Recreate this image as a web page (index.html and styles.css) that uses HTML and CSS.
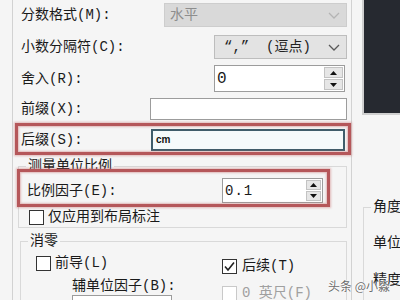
FILE: index.html
```html
<!DOCTYPE html>
<html lang="zh-CN">
<head>
<meta charset="utf-8">
<title>主单位</title>
<link rel="stylesheet" href="styles.css">
</head>
<body>
<div class="screen">
  <div class="form">
    <div class="row r1">
      <span class="lbl">分数格式(M):</span>
      <div class="select disabled ctl w183">
        <span>水平</span>
        <svg class="chev" width="12" height="7" viewBox="0 0 12 7"><polyline points="1,1 6,6 11,1"/></svg>
      </div>
    </div>
    <div class="row r2">
      <span class="lbl">小数分隔符(C):</span>
      <div class="select ctl w133">
        <span class="mono">“,”&nbsp;&nbsp;(逗点)</span>
        <svg class="chev" width="12" height="7" viewBox="0 0 12 7"><polyline points="1,1 6,6 11,1"/></svg>
      </div>
    </div>
    <div class="row r3">
      <span class="lbl">舍入(R):</span>
      <div class="input spinbox ctl w131">
        <span class="val big">0</span>
        <div class="spin">
          <span class="btn"><svg width="7" height="4" viewBox="0 0 7 4"><polygon points="0,4 3.5,0 7,4"/></svg></span>
          <span class="btn"><svg width="7" height="4" viewBox="0 0 7 4"><polygon points="0,0 3.5,4 7,0"/></svg></span>
        </div>
      </div>
    </div>
    <div class="row r4">
      <span class="lbl">前缀(X):</span>
      <div class="input ctl w197"></div>
    </div>
    <div class="row r5 marked">
      <span class="lbl">后缀(S):</span>
      <div class="input focus ctl w194"><span class="val small">cm</span></div>
    </div>

    <fieldset class="group g-scale">
      <legend>测量单位比例</legend>
      <div class="row r-scale marked2">
        <span class="lbl">比例因子(E):</span>
        <div class="input spinbox ctl w101">
          <span class="val num">0.1</span>
          <div class="spin">
            <span class="btn"><svg width="7" height="4" viewBox="0 0 7 4"><polygon points="0,4 3.5,0 7,4"/></svg></span>
            <span class="btn"><svg width="7" height="4" viewBox="0 0 7 4"><polygon points="0,0 3.5,4 7,0"/></svg></span>
          </div>
        </div>
      </div>
      <label class="check c-layout"><span class="cb"></span>仅应用到布局标注</label>
    </fieldset>

    <fieldset class="group g-zero">
      <legend>消零</legend>
      <div class="zero-cols">
        <div class="zcol left">
          <label class="check c-lead"><span class="cb"></span>前导(L)</label>
          <div class="sub-lbl">辅单位因子(B):</div>
          <div class="input spinbox sub-input">
            <div class="spin"><span class="btn"></span></div>
          </div>
        </div>
        <div class="zcol right">
          <label class="check c-trail"><span class="cb on"><svg width="13" height="13" viewBox="0 0 13 13"><polyline points="2,6.5 5,10 11,2.5"/></svg></span>后续(T)</label>
          <label class="check c-feet off"><span class="cb"></span>0&nbsp;英尺(F)</label>
        </div>
      </div>
    </fieldset>
  </div>

  <div class="side">
    <div class="preview"></div>
    <fieldset class="group g-angle">
      <legend>角度标注</legend>
      <div class="side-row s1">单位格式(A):</div>
      <div class="side-row s2">精度(O):</div>
    </fieldset>
  </div>

  <div class="watermark">头条 @小淼</div>
</div>
</body>
</html>
```

FILE: styles.css
```css
* { box-sizing: border-box; }
html, body { margin: 0; padding: 0; }
body {
  width: 400px;
  height: 300px;
  overflow: hidden;
  background: #f5f5f5;
  font-family: "Liberation Mono", "Noto Sans CJK SC", monospace;
  font-size: 14px;
  line-height: 16px;
  color: #1a1a1a;
}

.screen {
  position: relative;
  display: flex;
  height: 300px;
  padding-left: 12px;
  overflow: hidden;
}

.form {
  flex: none;
  width: 340px;
  border-left: 1px solid #d2d2d2;
  border-right: 1px solid #d2d2d2;
}

.row {
  position: relative;
  display: flex;
  align-items: center;
  padding: 0 4px 0 8px;
}
.lbl { white-space: nowrap; }
.ctl { margin-left: auto; height: 100%; }

.r1 { margin-top: 3px; height: 24px; }
.r2 { margin-top: 8px; height: 24px; }
.r3 { margin-top: 6px; height: 27px; padding-right: 6px; }
.r4 { margin-top: 6px; height: 22px; }
.r5 { margin-top: 9px; height: 22px; padding-right: 6px; }

.w183 { width: 183px; }
.w133 { width: 133px; }
.w131 { width: 131px; }
.w197 { width: 197px; }
.w194 { width: 194px; }
.w101 { width: 101px; }

.select {
  display: flex;
  align-items: center;
  padding: 0 6px 0 9px;
  background: #e3e3e3;
  border: 1px solid #bdbdbd;
  color: #222;
}
.select.disabled {
  padding-left: 5px;
  background: #d9d9d9;
  border-color: #cdcdcd;
  color: #8d8d8d;
}
.chev { margin-left: auto; fill: none; stroke: #5a5a5a; stroke-width: 1.3; }
.select.disabled .chev { stroke: #b4b4b4; }

.input {
  display: flex;
  align-items: center;
  background: #ffffff;
  border: 1px solid #9c9c9c;
}
.input.focus {
  background: #f5fafb;
  border: 2px solid #3f5d6b;
}
.val { padding-left: 3px; }
.val.big { font-size: 16px; padding-left: 2px; }
.val.num { letter-spacing: 1px; padding-left: 2px; }
.val.small {
  font-family: "Liberation Sans", sans-serif;
  font-size: 10px;
  font-weight: bold;
  padding-left: 3px;
  color: #111;
}

.spinbox { padding-right: 1px; }
.spin {
  margin-left: auto;
  display: flex;
  flex-direction: column;
  gap: 1px;
  width: 19px;
}
.btn {
  display: flex;
  align-items: center;
  justify-content: center;
  height: 11px;
  background: #e6e6e6;
  border: 1px solid #c3c3c3;
}
.btn svg { fill: #111; }
.r-scale .spin { width: 15px; }
.r-scale .btn { height: 10px; }

/* red annotation boxes */
.marked::after,
.marked2::after {
  content: "";
  position: absolute;
  border: 3px solid #b5575a;
  box-shadow: 0 0 2px 1px rgba(200, 110, 110, 0.45), inset 0 0 2px 1px rgba(200, 110, 110, 0.45);
  pointer-events: none;
}
.marked::after { left: 2px; right: 0; top: -6px; bottom: -4px; }
.marked2::after { left: -2px; right: 16px; top: -9px; bottom: -4px; }

/* group boxes */
.group {
  margin: 0;
  padding: 0;
  min-width: 0;
  border: 1px solid #d9d9d9;
}
.group legend {
  padding: 0 2px;
  margin-left: 7px;
  line-height: 16px;
  height: 16px;
}

.g-scale { margin: 7px 4px 0 5px; padding: 4px 0 2px 0; }
.r-scale { height: 25px; padding-left: 8px; padding-right: 23px; }

.check { display: flex; align-items: center; height: 16px; white-space: nowrap; }
.cb {
  flex: none;
  display: flex;
  align-items: center;
  justify-content: center;
  width: 15px;
  height: 15px;
  margin-right: 4px;
  background: #fff;
  border: 1px solid #333;
}
.cb svg { fill: none; stroke: #222; stroke-width: 1.6; }
.check.off { color: #a0a0a0; }
.check.off .cb { border-color: #c9c9c9; }

.c-layout { margin: 6px 0 0 10px; }

.g-zero { margin: 5px 4px 0 7px; height: 100px; }
.zero-cols { display: flex; padding-left: 15px; }
.zcol.left { width: 186px; }
.c-lead { margin-top: 6px; }
.sub-lbl { margin: 7px 0 0 36px; height: 16px; }
.sub-input { margin: 1px 0 0 36px; width: 100px; height: 20px; }
.sub-input .spin { width: 15px; }
.c-trail { margin-top: 9px; }
.c-trail .cb { margin-right: 5px; }
.c-feet { margin-top: 11px; }
.c-feet .cb { margin-right: 5px; }

/* right side */
.side {
  flex: none;
  width: 48px;
  display: flex;
  flex-direction: column;
}
.preview {
  flex: none;
  margin-left: 10px;
  height: 115px;
  background: #262930;
  border-left: 2px solid #cfcfcf;
  border-bottom: 2px solid #cfcfcf;
}
.g-angle {
  flex: none;
  width: 200px;
  height: 150px;
  margin: 84px 0 0 11px;
}
.side-row { padding-left: 9px; height: 16px; white-space: nowrap; }
.s1 { margin-top: 20px; }
.s2 { margin-top: 21px; }

.watermark {
  position: absolute;
  left: 328px;
  top: 279px;
  font-family: "Noto Sans CJK SC", sans-serif;
  font-size: 12px;
  line-height: 14px;
  color: rgba(80, 80, 80, 0.85);
  text-shadow: 0 0 2px #fff, 0 0 1px #fff;
  white-space: nowrap;
}
```
